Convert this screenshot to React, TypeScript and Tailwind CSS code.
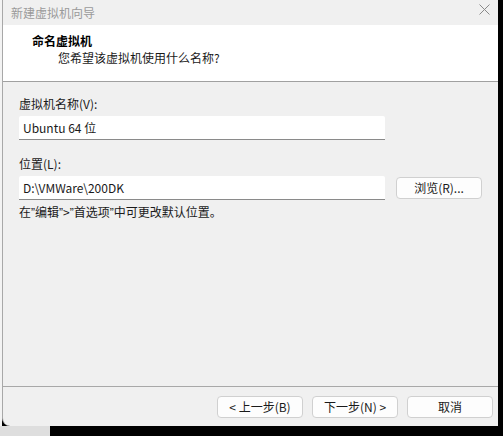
const font = { fontFamily: '"Noto Sans CJK SC", "Noto Sans", sans-serif' };

const Field = ({ value }: { value: string }) => (
  <div className="h-[24px] w-[366px] bg-white border-b border-[#8a8a8a] rounded-t-[2px] flex items-center px-[4px] text-[12px] text-[#1a1a1a]">
    {value}
  </div>
);

const Btn = ({ children }: { children: React.ReactNode }) => (
  <button className="h-[22px] w-[86px] bg-[#fdfdfd] border border-[#d0d0d0] rounded-[4px] text-[12px] text-[#1a1a1a] flex items-center justify-center leading-none">
    {children}
  </button>
);

// narrow latin quote mark, as the dialog font draws it
const Q = () => <span style={{ fontFamily: '"Liberation Sans", sans-serif' }}>”</span>;

export default function App() {
  return (
    <div className="w-[503px] h-[436px] bg-black flex flex-col overflow-hidden" style={font}>
      <div className="flex h-[426px]">
        <div className="w-[2px] bg-[#f3f3f3]" />
        <div className="w-[496px] h-full bg-[#f0f0f0] border-l border-[#a8a8a8] rounded-bl-[8px] flex flex-col">
          {/* title bar */}
          <div className="h-[25px] flex justify-between pl-[8px] pr-[8px] bg-[#f0f0f0]">
            <span className="text-[12px] text-[#9a9a9a] leading-[25px]">新建虚拟机向导</span>
            <svg width="11" height="11" viewBox="0 0 11 11" className="mt-[4px]">
              <path d="M0.5 0.5 L10.5 10.5 M10.5 0.5 L0.5 10.5" stroke="#8a8a8a" strokeWidth="1" />
            </svg>
          </div>
          {/* header */}
          <div className="h-[57px] bg-white border-b border-[#a0a0a0] pl-[29px] pt-[8px]">
            <div className="text-[12px] font-bold text-black leading-[16px]">命名虚拟机</div>
            <div className="text-[12px] text-[#1a1a1a] pl-[26px] leading-[16px] mt-[1px]">您希望该虚拟机使用什么名称?</div>
          </div>
          {/* body */}
          <div className="flex-1 pl-[16px] pt-[14px]">
            <div className="text-[12px] text-[#1a1a1a] leading-[16px]">虚拟机名称(V):</div>
            <div className="mt-[4px]">
              <Field value="Ubuntu 64 位" />
            </div>
            <div className="text-[12px] text-[#1a1a1a] leading-[16px] mt-[16px]">位置(L):</div>
            <div className="mt-[4px] flex items-center gap-[11px]">
              <Field value="D:\VMWare\200DK" />
              <Btn>浏览(R)...</Btn>
            </div>
            <div className="text-[12px] text-[#1a1a1a] leading-[16px] mt-[4px]">
              在<Q />编辑<Q />{">"}<Q />首选项<Q />中可更改默认位置。
            </div>
          </div>
          {/* footer */}
          <div className="h-[40px] border-t border-[#a8a8a8] flex justify-end gap-[9px] pr-[5px] pt-[9px]">
            <Btn>&lt; 上一步(B)</Btn>
            <Btn>下一步(N) &gt;</Btn>
            <Btn>取消</Btn>
          </div>
        </div>
        <div className="flex-1 bg-black" />
      </div>
      <div className="flex flex-1">
        <div className="w-[50px] bg-[#dedede]" />
        <div className="flex-1 bg-black" />
      </div>
    </div>
  );
}
